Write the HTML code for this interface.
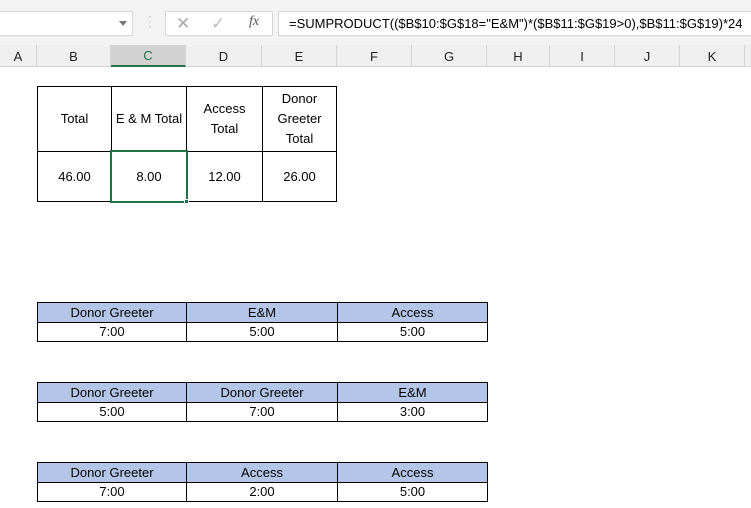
<!DOCTYPE html><html><head><style>
body{margin:0;width:751px;height:508px;background:#fff;position:relative;overflow:hidden;font-family:"Liberation Sans",sans-serif;font-size:13px;color:#000}
.a{position:absolute;box-sizing:border-box}
.c{display:flex;align-items:center;justify-content:center;text-align:center;line-height:20px}
.ch{position:absolute;top:45px;height:22px;border-right:1px solid #d4d4d4;display:flex;align-items:center;justify-content:center;font-size:13px;color:#222;box-sizing:border-box}
</style></head><body>
<div class="a" style="left:0;top:0;width:751px;height:45px;background:#f3f3f3"></div>
<div class="a" style="left:0;top:11px;width:133px;height:25px;background:#fff;border:1px solid #d6d6d6;border-left:none"></div>
<div class="a" style="left:119px;top:21px;width:0;height:0;border-left:4px solid transparent;border-right:4px solid transparent;border-top:5px solid #777"></div>
<div class="a" style="left:148px;top:15px;color:#aaa;font-size:11px;line-height:5px">·<br>·<br>·</div>
<div class="a" style="left:165px;top:11px;width:108px;height:25px;background:#fff;border:1px solid #d6d6d6"></div>
<div class="a" style="left:176px;top:14px;color:#aaa;font-size:17px">✕</div>
<div class="a" style="left:211px;top:14px;color:#bbb;font-size:17px">✓</div>
<div class="a" style="left:249px;top:14px;color:#555;font-size:14px;font-style:italic;font-family:'Liberation Serif',serif">fx</div>
<div class="a" style="left:278px;top:11px;width:480px;height:25px;background:#fff;border:1px solid #d6d6d6;padding:4px 0 0 10px;font-size:13px">=SUMPRODUCT(($B$10:$G$18="E&amp;M")*($B$11:$G$19&gt;0),$B$11:$G$19)*24</div>
<div class="a" style="left:0;top:45px;width:751px;height:22px;background:#efefef;border-bottom:1px solid #d4d4d4"></div>
<div class="ch" style="left:0;width:37px">A</div>
<div class="ch" style="left:37px;width:74px">B</div>
<div class="ch" style="left:111px;width:75px;background:#d2d2d2;color:#217346;border-bottom:2px solid #217346">C</div>
<div class="ch" style="left:186px;width:76px">D</div>
<div class="ch" style="left:262px;width:75px">E</div>
<div class="ch" style="left:337px;width:75px">F</div>
<div class="ch" style="left:412px;width:75px">G</div>
<div class="ch" style="left:487px;width:63px">H</div>
<div class="ch" style="left:550px;width:65px">I</div>
<div class="ch" style="left:615px;width:65px">J</div>
<div class="ch" style="left:680px;width:65px">K</div>

<!-- top table -->
<div class="a c" style="left:37px;top:86px;width:75px;height:66px;border:1px solid #000">Total</div>
<div class="a c" style="left:111px;top:86px;width:76px;height:66px;border:1px solid #000">E &amp; M Total</div>
<div class="a c" style="left:186px;top:86px;width:77px;height:66px;border:1px solid #000">Access<br>Total</div>
<div class="a c" style="left:262px;top:86px;width:75px;height:66px;border:1px solid #000">Donor<br>Greeter<br>Total</div>
<div class="a c" style="left:37px;top:151px;width:75px;height:51px;border:1px solid #000">46.00</div>
<div class="a c" style="left:111px;top:151px;width:76px;height:51px;border:1px solid #000">8.00</div>
<div class="a c" style="left:186px;top:151px;width:77px;height:51px;border:1px solid #000">12.00</div>
<div class="a c" style="left:262px;top:151px;width:75px;height:51px;border:1px solid #000">26.00</div>
<div class="a" style="left:110px;top:150px;width:78px;height:53px;border:2px solid #217346"></div>
<div class="a" style="left:184px;top:199px;width:5px;height:5px;background:#217346;border:1px solid #fff"></div>

<!-- small tables -->
<div id="t"></div>
<script>
var d=[[302,["Donor Greeter","E&M","Access"],["7:00","5:00","5:00"]],[382,["Donor Greeter","Donor Greeter","E&M"],["5:00","7:00","3:00"]],[462,["Donor Greeter","Access","Access"],["7:00","2:00","5:00"]]];
var xs=[37,186,337,487],h="";
d.forEach(function(t){for(var i=0;i<3;i++){var w=xs[i+1]-xs[i]+1;
h+='<div class="a c" style="left:'+xs[i]+'px;top:'+t[0]+'px;width:'+w+'px;height:21px;border:1px solid #000;background:#b4c6e7">'+t[1][i].replace("&","&amp;")+'</div>';
h+='<div class="a c" style="left:'+xs[i]+'px;top:'+(t[0]+20)+'px;width:'+w+'px;height:20px;border:1px solid #000">'+t[2][i]+'</div>';}});
document.getElementById("t").innerHTML=h;
</script>
</body></html>
